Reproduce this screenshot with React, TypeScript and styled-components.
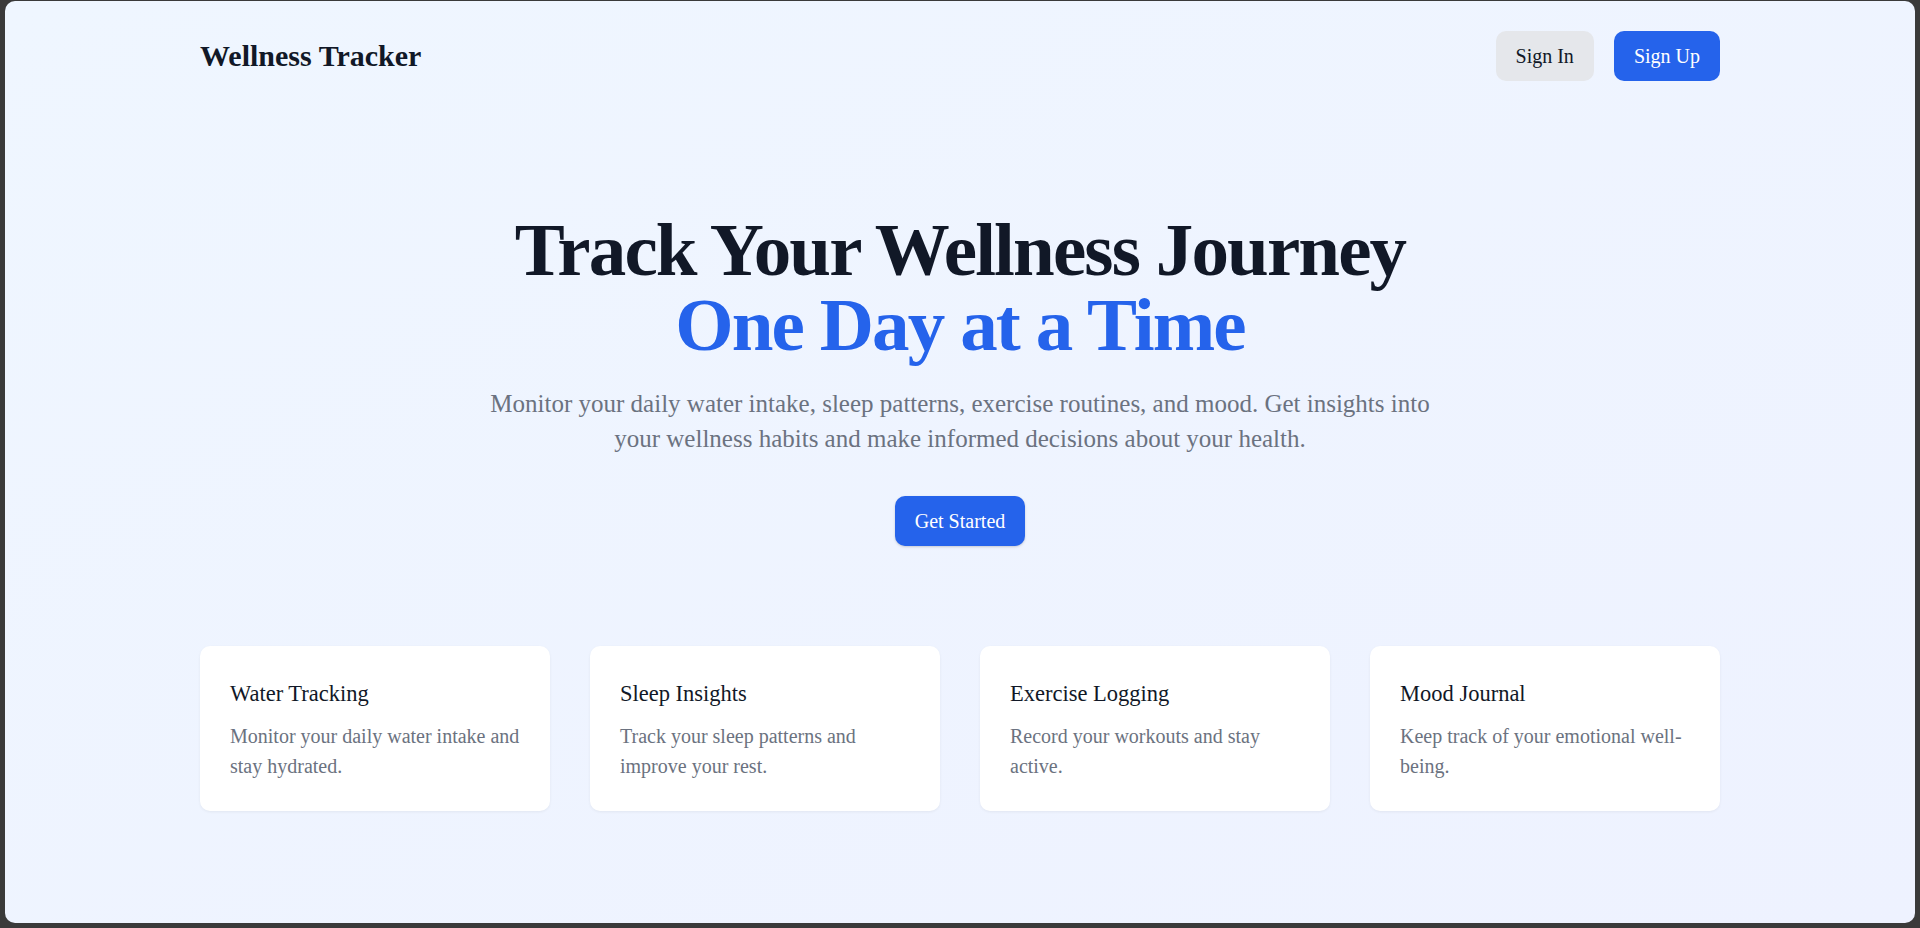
import React from "react";
import styled, { createGlobalStyle } from "styled-components";

const GlobalStyle = createGlobalStyle`
  html, body {
    margin: 0;
    padding: 0;
    background: #3a3a3a;
  }
  body {
    font-family: "Liberation Serif", "Times New Roman", serif;
  }
  * { box-sizing: border-box; }
`;

const Frame = styled.div`
  padding: 1px 5px 5px 5px;
  height: 928px;
  background: #3a3a3a;
`;

const Page = styled.div`
  height: 922px;
  border-radius: 10px;
  overflow: hidden;
  background: linear-gradient(to bottom right, #eff6ff, #eef2ff);
`;

const Container = styled.div`
  width: 1520px;
  margin: 0 auto;
`;

const Header = styled.header`
  display: flex;
  align-items: center;
  justify-content: space-between;
  padding: 30px 0;
`;

const Logo = styled.div`
  font-size: 30px;
  line-height: 37.5px;
  font-weight: 700;
  color: #111827;
`;

const Nav = styled.nav`
  display: flex;
  gap: 20px;
`;

const Button = styled.button<{ $variant?: "primary" | "secondary"; $shadow?: boolean }>`
  font-family: "Liberation Serif", "Times New Roman", serif;
  font-size: 20px;
  line-height: 30px;
  padding: 10px 20px;
  border: none;
  border-radius: 10px;
  cursor: pointer;
  background: ${(p) => (p.$variant === "secondary" ? "#e5e7eb" : "#2563eb")};
  color: ${(p) => (p.$variant === "secondary" ? "#111827" : "#ffffff")};
  box-shadow: ${(p) => (p.$shadow ? "0 1px 3px rgba(0,0,0,0.12), 0 1px 2px rgba(0,0,0,0.06)" : "none")};
`;

const Hero = styled.section`
  padding: 101px 0 100px;
  display: flex;
  flex-direction: column;
  align-items: center;
  text-align: center;
`;

const Heading = styled.h1`
  margin: 0 0 24px;
  font-size: 75px;
  line-height: 75px;
  font-weight: 700;
  letter-spacing: -0.025em;
  color: #111827;
`;

const HeadingLine = styled.span<{ $accent?: boolean }>`
  display: block;
  color: ${(p) => (p.$accent ? "#2563eb" : "#111827")};
`;

const Lead = styled.p`
  margin: 0 0 40px;
  max-width: 960px;
  font-size: 25px;
  line-height: 35px;
  color: #6b7280;
`;

const Features = styled.div`
  display: grid;
  grid-template-columns: repeat(4, 1fr);
  gap: 40px;
`;

const Card = styled.div`
  background: #ffffff;
  border-radius: 10px;
  padding: 30px;
  box-shadow: 0 1px 3px rgba(0, 0, 0, 0.06);
`;

const CardTitle = styled.h3`
  margin: 0 0 10px;
  font-size: 22.5px;
  line-height: 35px;
  font-weight: 400;
  color: #111827;
`;

const CardText = styled.p`
  margin: 0;
  font-size: 20px;
  line-height: 30px;
  color: #6b7280;
`;

const features = [
  { title: "Water Tracking", text: "Monitor your daily water intake and stay hydrated." },
  { title: "Sleep Insights", text: "Track your sleep patterns and improve your rest." },
  { title: "Exercise Logging", text: "Record your workouts and stay active." },
  { title: "Mood Journal", text: "Keep track of your emotional well-being." },
];

export default function App() {
  return (
    <>
      <GlobalStyle />
      <Frame>
        <Page>
          <Container>
            <Header>
              <Logo>Wellness Tracker</Logo>
              <Nav>
                <Button $variant="secondary">Sign In</Button>
                <Button $variant="primary">Sign Up</Button>
              </Nav>
            </Header>
            <Hero>
              <Heading>
                <HeadingLine>Track Your Wellness Journey</HeadingLine>
                <HeadingLine $accent>One Day at a Time</HeadingLine>
              </Heading>
              <Lead>
                Monitor your daily water intake, sleep patterns, exercise routines, and mood. Get insights into
                your wellness habits and make informed decisions about your health.
              </Lead>
              <Button $variant="primary" $shadow>
                Get Started
              </Button>
            </Hero>
            <Features>
              {features.map((f) => (
                <Card key={f.title}>
                  <CardTitle>{f.title}</CardTitle>
                  <CardText>{f.text}</CardText>
                </Card>
              ))}
            </Features>
          </Container>
        </Page>
      </Frame>
    </>
  );
}
